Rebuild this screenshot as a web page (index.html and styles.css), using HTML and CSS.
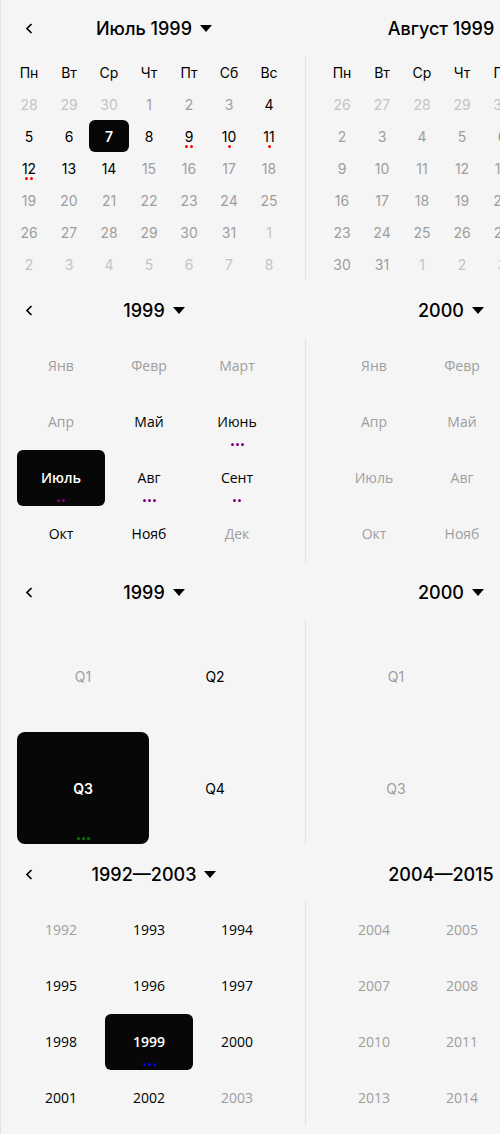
FILE: index.html
```html
<!DOCTYPE html>
<html lang="ru">
<head>
<meta charset="utf-8">
<title>Calendars</title>
<link rel="stylesheet" href="styles.css">
</head>
<body>
<div class="page">

  <!-- Days -->
  <section class="cal">
    <div class="panel">
      <div class="head">
        <span class="nav"><svg width="8" height="11" viewBox="0 0 8 11"><path d="M6.5 1 L2 5.5 L6.5 10" fill="none" stroke="#000" stroke-width="1.7"/></svg></span>
        <span class="title">Июль 1999<svg class="caret" width="12" height="7" viewBox="0 0 12 7"><path d="M0 0 H12 L6 7 Z" fill="#000"/></svg></span>
        <span class="nav"></span>
      </div>
      <div class="days">
        <span class="wd">Пн</span><span class="wd">Вт</span><span class="wd">Ср</span><span class="wd">Чт</span><span class="wd">Пт</span><span class="wd">Сб</span><span class="wd">Вс</span>
        <span class="d out">28</span><span class="d out">29</span><span class="d out">30</span><span class="d off">1</span><span class="d off">2</span><span class="d off">3</span><span class="d">4</span>
        <span class="d">5</span><span class="d">6</span><span class="d sel">7</span><span class="d">8</span><span class="d">9<i class="dots red"><b></b><b></b></i></span><span class="d">10<i class="dots red"><b></b></i></span><span class="d">11<i class="dots red"><b></b></i></span>
        <span class="d">12<i class="dots red"><b></b><b></b></i></span><span class="d">13</span><span class="d">14</span><span class="d off">15</span><span class="d off">16</span><span class="d off">17</span><span class="d off">18</span>
        <span class="d off">19</span><span class="d off">20</span><span class="d off">21</span><span class="d off">22</span><span class="d off">23</span><span class="d off">24</span><span class="d off">25</span>
        <span class="d off">26</span><span class="d off">27</span><span class="d off">28</span><span class="d off">29</span><span class="d off">30</span><span class="d off">31</span><span class="d out">1</span>
        <span class="d out">2</span><span class="d out">3</span><span class="d out">4</span><span class="d out">5</span><span class="d out">6</span><span class="d out">7</span><span class="d out">8</span>
      </div>
    </div>
    <div class="sep"></div>
    <div class="panel">
      <div class="head">
        <span class="nav"></span>
        <span class="title title-r">Август 1999<svg class="caret" width="12" height="7" viewBox="0 0 12 7"><path d="M0 0 H12 L6 7 Z" fill="#000"/></svg></span>
        <span class="nav"></span>
      </div>
      <div class="days">
        <span class="wd">Пн</span><span class="wd">Вт</span><span class="wd">Ср</span><span class="wd">Чт</span><span class="wd">Пт</span><span class="wd">Сб</span><span class="wd">Вс</span>
        <span class="d out">26</span><span class="d out">27</span><span class="d out">28</span><span class="d out">29</span><span class="d out">30</span><span class="d out">31</span><span class="d off">1</span>
        <span class="d off">2</span><span class="d off">3</span><span class="d off">4</span><span class="d off">5</span><span class="d off">6</span><span class="d off">7</span><span class="d off">8</span>
        <span class="d off">9</span><span class="d off">10</span><span class="d off">11</span><span class="d off">12</span><span class="d off">13</span><span class="d off">14</span><span class="d off">15</span>
        <span class="d off">16</span><span class="d off">17</span><span class="d off">18</span><span class="d off">19</span><span class="d off">20</span><span class="d off">21</span><span class="d off">22</span>
        <span class="d off">23</span><span class="d off">24</span><span class="d off">25</span><span class="d off">26</span><span class="d off">27</span><span class="d off">28</span><span class="d off">29</span>
        <span class="d off">30</span><span class="d off">31</span><span class="d out">1</span><span class="d out">2</span><span class="d out">3</span><span class="d out">4</span><span class="d out">5</span>
      </div>
    </div>
  </section>

  <!-- Months -->
  <section class="cal">
    <div class="panel">
      <div class="head">
        <span class="nav"><svg width="8" height="11" viewBox="0 0 8 11"><path d="M6.5 1 L2 5.5 L6.5 10" fill="none" stroke="#000" stroke-width="1.7"/></svg></span>
        <span class="title">1999<svg class="caret" width="12" height="7" viewBox="0 0 12 7"><path d="M0 0 H12 L6 7 Z" fill="#000"/></svg></span>
        <span class="nav"></span>
      </div>
      <div class="grid3">
        <span class="c off">Янв</span><span class="c off">Февр</span><span class="c off">Март</span>
        <span class="c off">Апр</span><span class="c">Май</span><span class="c">Июнь<i class="dots purple"><b></b><b></b><b></b></i></span>
        <span class="c sel">Июль<i class="dots purple"><b></b><b></b></i></span><span class="c">Авг<i class="dots purple"><b></b><b></b><b></b></i></span><span class="c">Сент<i class="dots purple"><b></b><b></b></i></span>
        <span class="c">Окт</span><span class="c">Нояб</span><span class="c off">Дек</span>
      </div>
    </div>
    <div class="sep"></div>
    <div class="panel">
      <div class="head">
        <span class="nav"></span>
        <span class="title title-r">2000<svg class="caret" width="12" height="7" viewBox="0 0 12 7"><path d="M0 0 H12 L6 7 Z" fill="#000"/></svg></span>
        <span class="nav"></span>
      </div>
      <div class="grid3">
        <span class="c off">Янв</span><span class="c off">Февр</span><span class="c off">Март</span>
        <span class="c off">Апр</span><span class="c off">Май</span><span class="c off">Июнь</span>
        <span class="c off">Июль</span><span class="c off">Авг</span><span class="c off">Сент</span>
        <span class="c off">Окт</span><span class="c off">Нояб</span><span class="c off">Дек</span>
      </div>
    </div>
  </section>

  <!-- Quarters -->
  <section class="cal">
    <div class="panel">
      <div class="head">
        <span class="nav"><svg width="8" height="11" viewBox="0 0 8 11"><path d="M6.5 1 L2 5.5 L6.5 10" fill="none" stroke="#000" stroke-width="1.7"/></svg></span>
        <span class="title">1999<svg class="caret" width="12" height="7" viewBox="0 0 12 7"><path d="M0 0 H12 L6 7 Z" fill="#000"/></svg></span>
        <span class="nav"></span>
      </div>
      <div class="grid2">
        <span class="q off">Q1</span><span class="q">Q2</span>
        <span class="q sel">Q3<i class="dots green"><b></b><b></b><b></b></i></span><span class="q">Q4</span>
      </div>
    </div>
    <div class="sep"></div>
    <div class="panel">
      <div class="head">
        <span class="nav"></span>
        <span class="title title-r">2000<svg class="caret" width="12" height="7" viewBox="0 0 12 7"><path d="M0 0 H12 L6 7 Z" fill="#000"/></svg></span>
        <span class="nav"></span>
      </div>
      <div class="grid2">
        <span class="q off">Q1</span><span class="q off">Q2</span>
        <span class="q off">Q3</span><span class="q off">Q4</span>
      </div>
    </div>
  </section>

  <!-- Years -->
  <section class="cal">
    <div class="panel">
      <div class="head">
        <span class="nav"><svg width="8" height="11" viewBox="0 0 8 11"><path d="M6.5 1 L2 5.5 L6.5 10" fill="none" stroke="#000" stroke-width="1.7"/></svg></span>
        <span class="title">1992—2003<svg class="caret" width="12" height="7" viewBox="0 0 12 7"><path d="M0 0 H12 L6 7 Z" fill="#000"/></svg></span>
        <span class="nav"></span>
      </div>
      <div class="grid3">
        <span class="c y off">1992</span><span class="c y">1993</span><span class="c y">1994</span>
        <span class="c y">1995</span><span class="c y">1996</span><span class="c y">1997</span>
        <span class="c y">1998</span><span class="c y sel">1999<i class="dots blue"><b></b><b></b><b></b></i></span><span class="c y">2000</span>
        <span class="c y">2001</span><span class="c y">2002</span><span class="c y off">2003</span>
      </div>
    </div>
    <div class="sep"></div>
    <div class="panel">
      <div class="head">
        <span class="nav"></span>
        <span class="title title-r">2004—2015<svg class="caret" width="12" height="7" viewBox="0 0 12 7"><path d="M0 0 H12 L6 7 Z" fill="#000"/></svg></span>
        <span class="nav"></span>
      </div>
      <div class="grid3">
        <span class="c y off">2004</span><span class="c y off">2005</span><span class="c y off">2006</span>
        <span class="c y off">2007</span><span class="c y off">2008</span><span class="c y off">2009</span>
        <span class="c y off">2010</span><span class="c y off">2011</span><span class="c y off">2012</span>
        <span class="c y off">2013</span><span class="c y off">2014</span><span class="c y off">2015</span>
      </div>
    </div>
  </section>

</div>
</body>
</html>
```

FILE: styles.css
```css
html, body {
  margin: 0;
  padding: 0;
  background: #f5f5f5;
  overflow: hidden;
}

.page {
  width: 500px;
  height: 1134px;
  overflow: hidden;
  border-left: 1px solid #e4e4e4;
  box-sizing: border-box;
  font-family: Inter, "Noto Sans", sans-serif;
  color: #000;
}

.cal {
  display: flex;
  gap: 8px;
  width: 620px;
  padding-bottom: 2px;
}

.panel {
  width: 296px;
  flex: none;
}

.sep {
  flex: none;
  width: 1px;
  margin-top: 56px;
  background: #e2e2e2;
}

.head {
  height: 56px;
  display: grid;
  grid-template-columns: 40px 1fr 40px;
  align-items: center;
  padding: 0 8px;
}

.nav {
  display: flex;
  justify-content: center;
  align-items: center;
}

.title {
  display: flex;
  justify-content: center;
  align-items: center;
  font-size: 18px;
  font-weight: 500;
  padding-left: 10px;
  white-space: nowrap;
}

.title-r {
  padding-left: 0;
  padding-right: 22px;
}

.caret {
  margin-left: 8px;
  margin-top: 1px;
}

.days {
  display: grid;
  grid-template-columns: repeat(7, 40px);
  grid-auto-rows: 32px;
  justify-content: center;
  font-size: 14px;
}

.wd, .d, .c, .q {
  position: relative;
  display: flex;
  align-items: center;
  justify-content: center;
}

.off { color: #9e9e9e; }
.d.out { color: #c4c4c4; }

.sel {
  background: #070707;
  color: #fff;
  font-weight: 600;
  border-radius: 6px;
}

.grid3 {
  display: grid;
  grid-template-columns: repeat(3, 88px);
  grid-auto-rows: 56px;
  justify-content: center;
  font-family: "Open Sans", "Noto Sans", sans-serif;
  font-size: 14px;
}

.c {
  padding-bottom: 2px;
  box-sizing: border-box;
}

.grid2 {
  display: grid;
  grid-template-columns: repeat(2, 132px);
  grid-auto-rows: 112px;
  justify-content: center;
  font-size: 14px;
}

.q.sel { border-radius: 8px; }

.dots {
  position: absolute;
  left: 0;
  right: 0;
  bottom: 4px;
  display: flex;
  justify-content: center;
  gap: 2px;
}

.dots b {
  width: 3px;
  height: 3px;
  border-radius: 50%;
}

.red b { background: #ff0000; }
.purple b { background: #800080; }
.green b { background: #008000; }
.blue b { background: #0000ff; }
```
